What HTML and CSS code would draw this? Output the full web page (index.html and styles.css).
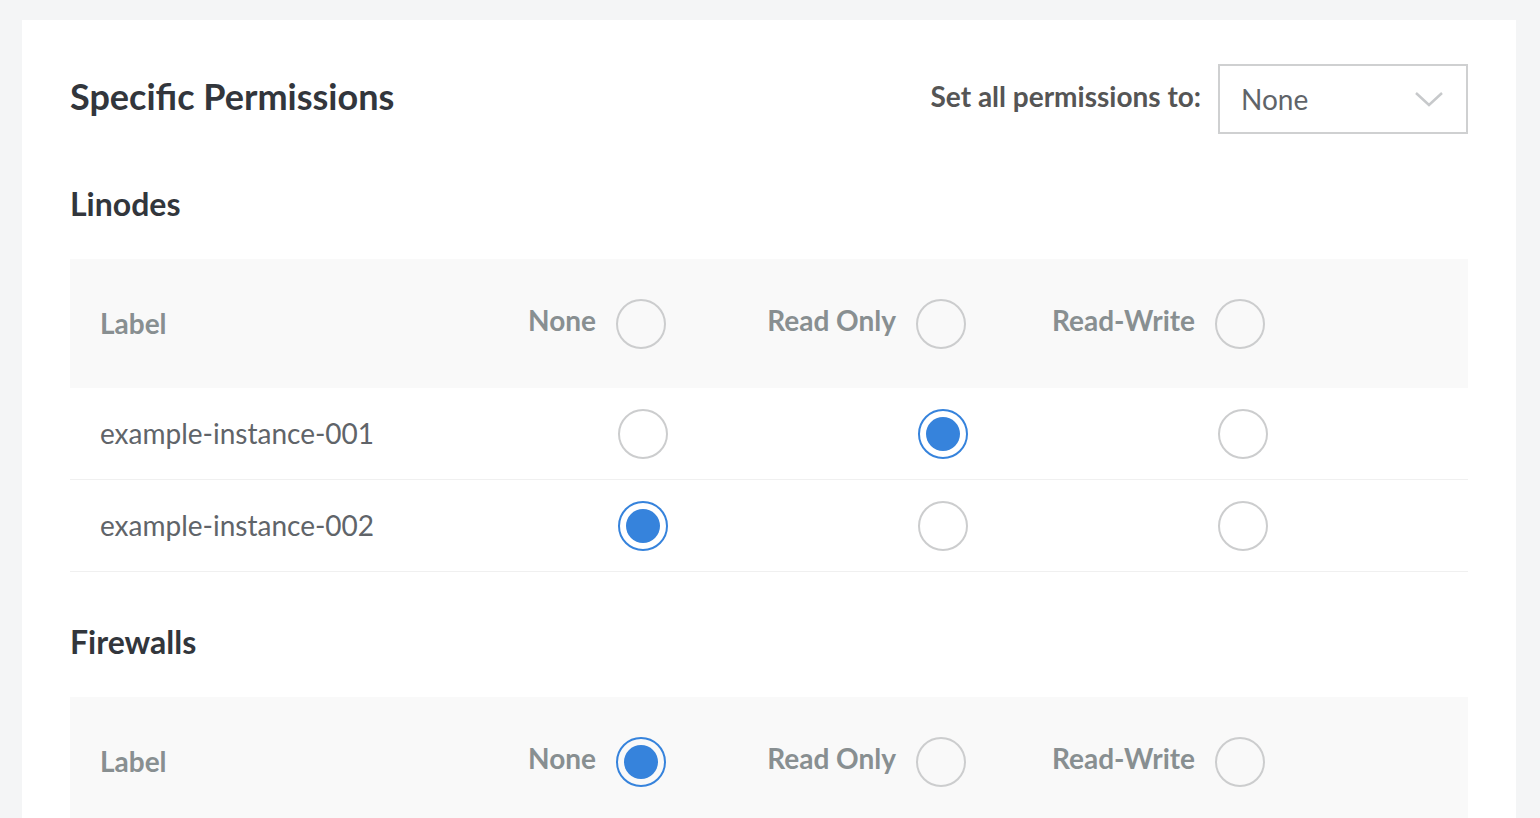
FILE: index.html
```html
<!DOCTYPE html>
<html>
<head>
<meta charset="utf-8">
<link rel="stylesheet" href="styles.css">
</head>
<body>
<div class="card">
  <div class="top">
    <h1 class="title">Specific Permissions</h1>
    <div class="setall">
      <span class="setall-label">Set all permissions to:</span>
      <div class="select">
        <span class="select-value">None</span>
        <svg class="chevron" width="30" height="16" viewBox="0 0 30 16"><path d="M2 2 L15 14 L28 2" fill="none" stroke="#c7c9cb" stroke-width="2.5"/></svg>
      </div>
    </div>
  </div>

  <section class="group">
    <h2 class="group-title">Linodes</h2>
    <div class="table">
      <div class="row head">
        <div class="cell label">Label</div>
        <div class="cell perm"><span class="perm-text">None</span><span class="radio"></span></div>
        <div class="cell perm"><span class="perm-text">Read Only</span><span class="radio"></span></div>
        <div class="cell perm"><span class="perm-text">Read-Write</span><span class="radio"></span></div>
        <div class="cell"></div>
      </div>
      <div class="row body">
        <div class="cell label">example-instance-001</div>
        <div class="cell perm"><span class="radio"></span></div>
        <div class="cell perm"><span class="radio on"><span class="dot"></span></span></div>
        <div class="cell perm"><span class="radio"></span></div>
        <div class="cell"></div>
      </div>
      <div class="row body">
        <div class="cell label">example-instance-002</div>
        <div class="cell perm"><span class="radio on"><span class="dot"></span></span></div>
        <div class="cell perm"><span class="radio"></span></div>
        <div class="cell perm"><span class="radio"></span></div>
        <div class="cell"></div>
      </div>
    </div>
  </section>

  <section class="group">
    <h2 class="group-title">Firewalls</h2>
    <div class="table">
      <div class="row head">
        <div class="cell label">Label</div>
        <div class="cell perm"><span class="perm-text">None</span><span class="radio on"><span class="dot"></span></span></div>
        <div class="cell perm"><span class="perm-text">Read Only</span><span class="radio"></span></div>
        <div class="cell perm"><span class="perm-text">Read-Write</span><span class="radio"></span></div>
        <div class="cell"></div>
      </div>
    </div>
  </section>
</div>
</body>
</html>
```

FILE: styles.css
```css
html, body {
  margin: 0;
  padding: 0;
  background: #f4f5f6;
  font-family: Lato, "Noto Sans", sans-serif;
  overflow: hidden;
}

.card {
  background: #ffffff;
  margin: 20px 24px 0 22px;
  padding: 44px 48px 40px 48px;
  min-height: 900px;
  box-sizing: border-box;
}

.top {
  display: flex;
  align-items: center;
  justify-content: space-between;
}

.title {
  margin: -7px 0 0 0;
  font-size: 36px;
  font-weight: 700;
  color: #32363c;
  line-height: 40px;
}

.setall {
  display: flex;
  align-items: center;
  gap: 17px;
}

.setall-label {
  font-size: 28px;
  font-weight: 700;
  color: #555555;
  line-height: 34px;
  margin-top: -6px;
}

.select {
  width: 250px;
  height: 70px;
  box-sizing: border-box;
  border: 2px solid #cfd0d1;
  display: flex;
  align-items: center;
  justify-content: space-between;
  padding: 0 22px 0 21px;
}

.select-value {
  font-size: 28px;
  color: #606469;
  line-height: 34px;
  margin-top: 0;
}

.chevron {
  display: block;
}

.group {
  margin-top: 52px;
}

.group + .group {
  margin-top: 52px;
}

.group-title {
  margin: 0 0 37px 0;
  font-size: 32px;
  font-weight: 700;
  color: #32363c;
  line-height: 36px;
}

.table {
  display: flex;
  flex-direction: column;
}

.row {
  display: grid;
  grid-template-columns: 320px 300px 300px 300px 1fr;
  align-items: center;
}

.row.head {
  background: #f9f9f9;
  height: 129px;
}

.row.body {
  height: 91px;
  border-bottom: 1px solid #f0f0f0;
  background: #ffffff;
}

.cell.label {
  padding-left: 30px;
  font-size: 28px;
  line-height: 34px;
}

.head .cell.label {
  font-weight: 700;
  color: #888f91;
  margin-top: -2px;
}

.body .cell.label {
  color: #606469;
  margin-top: -2px;
}

.cell.perm {
  display: flex;
  align-items: center;
  justify-content: flex-end;
  gap: 20px;
}

.head .cell.perm {
  padding-right: 24px;
}

.head .cell.perm:nth-child(4) {
  padding-right: 25px;
}

.body .cell.perm {
  padding-right: 22px;
}

.perm-text {
  font-size: 28px;
  font-weight: 700;
  color: #888f91;
  line-height: 34px;
  margin-top: -7px;
}

.radio {
  width: 50px;
  height: 50px;
  box-sizing: border-box;
  border: 2px solid #cccdce;
  border-radius: 50%;
  display: flex;
  align-items: center;
  justify-content: center;
  flex: none;
}

.radio.on {
  border-color: #3683dc;
}

.dot {
  width: 34px;
  height: 34px;
  border-radius: 50%;
  background: #3683dc;
}
```
